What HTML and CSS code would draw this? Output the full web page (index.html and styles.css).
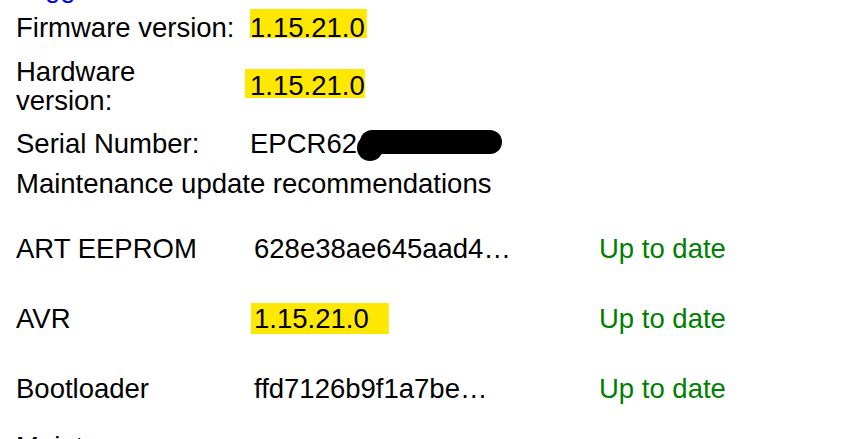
FILE: index.html
```html
<!DOCTYPE html>
<html lang="en">

<head>
    <meta charset="UTF-8">
    <meta name="viewport" content="width=device-width, initial-scale=1.0">
    <link rel="stylesheet" href="styles.css">
    <title>Device Info</title>
</head>

<body>
    <a class="crumb" href="#">Toggle details</a>

    <div class="info">
        <div class="label">Firmware version:</div>
        <div class="value"><span class="hl hl-fw">1.15.21.0</span></div>

        <div class="label narrow">Hardware version:</div>
        <div class="value"><span class="hl hl-hw">1.15.21.0</span></div>

        <div class="label">Serial Number:</div>
        <div class="value serial">EPCR62
            <!-- marker stroke over the rest of the serial -->
            <svg class="redact" viewBox="0 0 146 34">
                <rect x="4" y="2" width="142" height="24" rx="12" />
                <ellipse cx="14" cy="20" rx="13" ry="13" />
            </svg>
        </div>
    </div>

    <h2 class="heading">Maintenance update recommendations</h2>
    <div class="updates">
        <div>ART EEPROM</div>
        <div>628e38ae645aad4…</div>
        <div class="ok">Up to date</div>

        <div>AVR</div>
        <div><span class="hl hl-avr">1.15.21.0</span></div>
        <div class="ok">Up to date</div>

        <div>Bootloader</div>
        <div>ffd7126b9f1a7be…</div>
        <div class="ok">Up to date</div>
    </div>

    <h2 class="heading next">Maintenance summary</h2>
</body>

</html>
```

FILE: styles.css
```css
body {
    margin: 0;
    padding-left: 16px;
    background: #fff;
    color: #000;
    font-family: "Liberation Sans", Arial, sans-serif;
    font-size: 27.5px;
    line-height: 29px;
}

/* link row, mostly scrolled out of view */
.crumb {
    display: block;
    margin: -27px 0 11px;
    color: #0000ee;
    text-decoration: none;
}

.info {
    display: grid;
    grid-template-columns: 234px auto;
    row-gap: 14.5px;
    align-items: center;
}

.narrow {
    max-width: 140px;
}

.serial {
    position: relative;
    white-space: nowrap;
}

.redact {
    position: absolute;
    left: 106px;
    top: -1px;
    width: 146px;
    height: 34px;
    fill: #000;
}

.heading {
    margin: 11px 0 0;
    font-size: inherit;
    font-weight: normal;
}

.heading.next {
    margin-top: 8px;
}

.updates {
    display: grid;
    grid-template-columns: 238px 345px auto;
    grid-auto-rows: 70px;
    align-items: center;
    margin-top: 15.5px;
}

.ok {
    color: #008000;
}

/* highlighter pen marks */
.hl {
    background: linear-gradient(#ffe800, #ffe800) no-repeat top / 100% 29px;
}

.hl-fw {
    padding: 3px 2px 0 0;
}

.hl-hw {
    padding: 1px 0 0 5px;
    margin-left: -5px;
}

.hl-avr {
    padding: 0 20px 0 3px;
    margin-left: -3px;
    background-size: 100% 31px;
}
```
